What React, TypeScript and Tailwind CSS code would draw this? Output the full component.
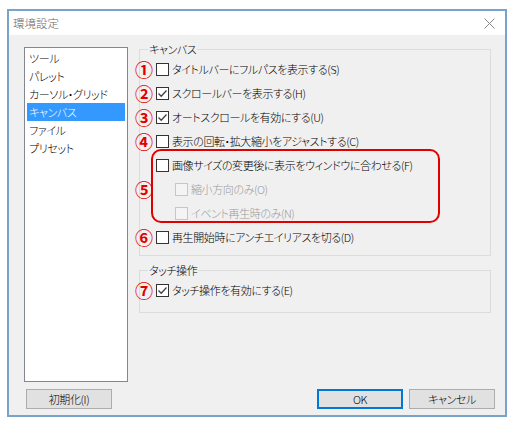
import * as React from "react"

type Row = {
  mark?: string
  label: string
  checked?: boolean
  disabled?: boolean
  indent?: boolean
}

const CheckBox = ({ checked, disabled }: { checked?: boolean; disabled?: boolean }) => (
  <span
    className={
      "w-[13px] h-[13px] shrink-0 border flex items-center justify-center " +
      (disabled ? "border-[#c6c6c6] bg-[#f4f4f4]" : "border-[#333] bg-white")
    }
  >
    {checked && (
      <svg width="11" height="11" viewBox="0 0 11 11">
        <polyline points="1.5,5.5 4.2,8.2 9.5,2.5" fill="none" stroke="#404040" strokeWidth="1.3" />
      </svg>
    )}
  </span>
)

const Mark = ({ n }: { n: string }) => (
  <span className="absolute left-[-21px] top-1/2 -translate-y-1/2 text-[18px] leading-[18px] font-bold tracking-normal text-[#e00000]">
    {n}
  </span>
)

const CheckRow = ({ row }: { row: Row }) => (
  <div className={"relative h-[24px] flex items-center gap-[3px] " + (row.indent ? "pl-[19px]" : "")}>
    {row.mark && <Mark n={row.mark} />}
    <CheckBox checked={row.checked} disabled={row.disabled} />
    <span className={row.disabled ? "text-[#9a9a9a]" : "text-black"}>{row.label}</span>
  </div>
)

const Btn = ({ label, primary }: { label: string; primary?: boolean }) => (
  <button
    className={
      "w-[86px] h-[20px] bg-[#e1e1e1] text-[11px] leading-none text-black flex items-center justify-center " +
      (primary ? "border-2 border-[#0078d7]" : "border border-[#adadad]")
    }
  >
    {label}
  </button>
)

const items = ["ツール", "パレット", "カーソル・グリッド", "キャンバス", "ファイル", "プリセット"]

export default function App() {
  return (
    <div className="w-[515px] h-[428px] bg-white pt-[9px] pl-[7px] font-['Noto_Sans_CJK_JP',sans-serif] font-light [font-feature-settings:'palt'] text-[11px] tracking-[-0.4px] leading-[14px]">
      <div className="w-[500px] h-[408px] border-2 border-[#7aa3cc] flex flex-col">
        {/* title bar */}
        <div className="h-[24px] bg-white flex items-center justify-between pl-[4px] pr-[10px]">
          <span className="text-[#666] text-[11.5px] tracking-normal">環境設定</span>
          <svg width="11" height="11" viewBox="0 0 11 11">
            <line x1="0.5" y1="0.5" x2="10.5" y2="10.5" stroke="#888" strokeWidth="1" />
            <line x1="10.5" y1="0.5" x2="0.5" y2="10.5" stroke="#888" strokeWidth="1" />
          </svg>
        </div>

        <div className="flex-1 bg-[#f0f0f0] flex flex-col">
          <div className="flex items-start">
            {/* category list */}
            <div className="ml-[15px] mt-[12px] w-[104px] h-[335px] bg-white border border-[#828790] px-[2px] py-[1px]">
              {items.map((it) => (
                <div
                  key={it}
                  className={
                    "h-[18px] flex items-center pl-[2px] " +
                    (it === "キャンバス" ? "bg-[#3399ff] text-white" : "text-black")
                  }
                >
                  {it}
                </div>
              ))}
            </div>

            <div className="ml-[11px] mt-[7px] w-[352px] flex flex-col">
              <fieldset className="border border-[#dcdcdc] pl-[16px] pt-[1px] pb-[6px]">
                <legend className="ml-[-8px] px-[1px] leading-[14px] text-black">キャンバス</legend>
                <CheckRow row={{ mark: "①", label: "タイトルバーにフルパスを表示する(S)" }} />
                <CheckRow row={{ mark: "②", label: "スクロールバーを表示する(H)", checked: true }} />
                <CheckRow row={{ mark: "③", label: "オートスクロールを有効にする(U)", checked: true }} />
                <CheckRow row={{ mark: "④", label: "表示の回転・拡大縮小をアジャストする(C)" }} />
                <div className="relative">
                  <div className="absolute left-[-5px] top-[-4px] w-[289px] h-[74px] border-2 border-[#e00000] rounded-[10px]" />
                  <span className="absolute left-[-21px] top-[27px] text-[18px] leading-[18px] font-bold tracking-normal text-[#e00000]">⑤</span>
                  <CheckRow row={{ label: "画像サイズの変更後に表示をウィンドウに合わせる(F)" }} />
                  <CheckRow row={{ label: "縮小方向のみ(O)", disabled: true, indent: true }} />
                  <CheckRow row={{ label: "イベント再生時のみ(N)", disabled: true, indent: true }} />
                </div>
                <CheckRow row={{ mark: "⑥", label: "再生開始時にアンチエイリアスを切る(D)" }} />
              </fieldset>

              <fieldset className="mt-[7px] border border-[#dcdcdc] pl-[16px] pt-[1px] pb-[10px]">
                <legend className="ml-[-8px] px-[1px] leading-[14px] text-black">タッチ操作</legend>
                <CheckRow row={{ mark: "⑦", label: "タッチ操作を有効にする(E)", checked: true }} />
              </fieldset>
            </div>
          </div>

          {/* buttons */}
          <div className="mt-[7px] flex items-center pl-[17px] pr-[10px]">
            <Btn label="初期化(I)" />
            <div className="ml-auto flex gap-[6px]">
              <Btn label="OK" primary />
              <Btn label="キャンセル" />
            </div>
          </div>
        </div>
      </div>
    </div>
  )
}
